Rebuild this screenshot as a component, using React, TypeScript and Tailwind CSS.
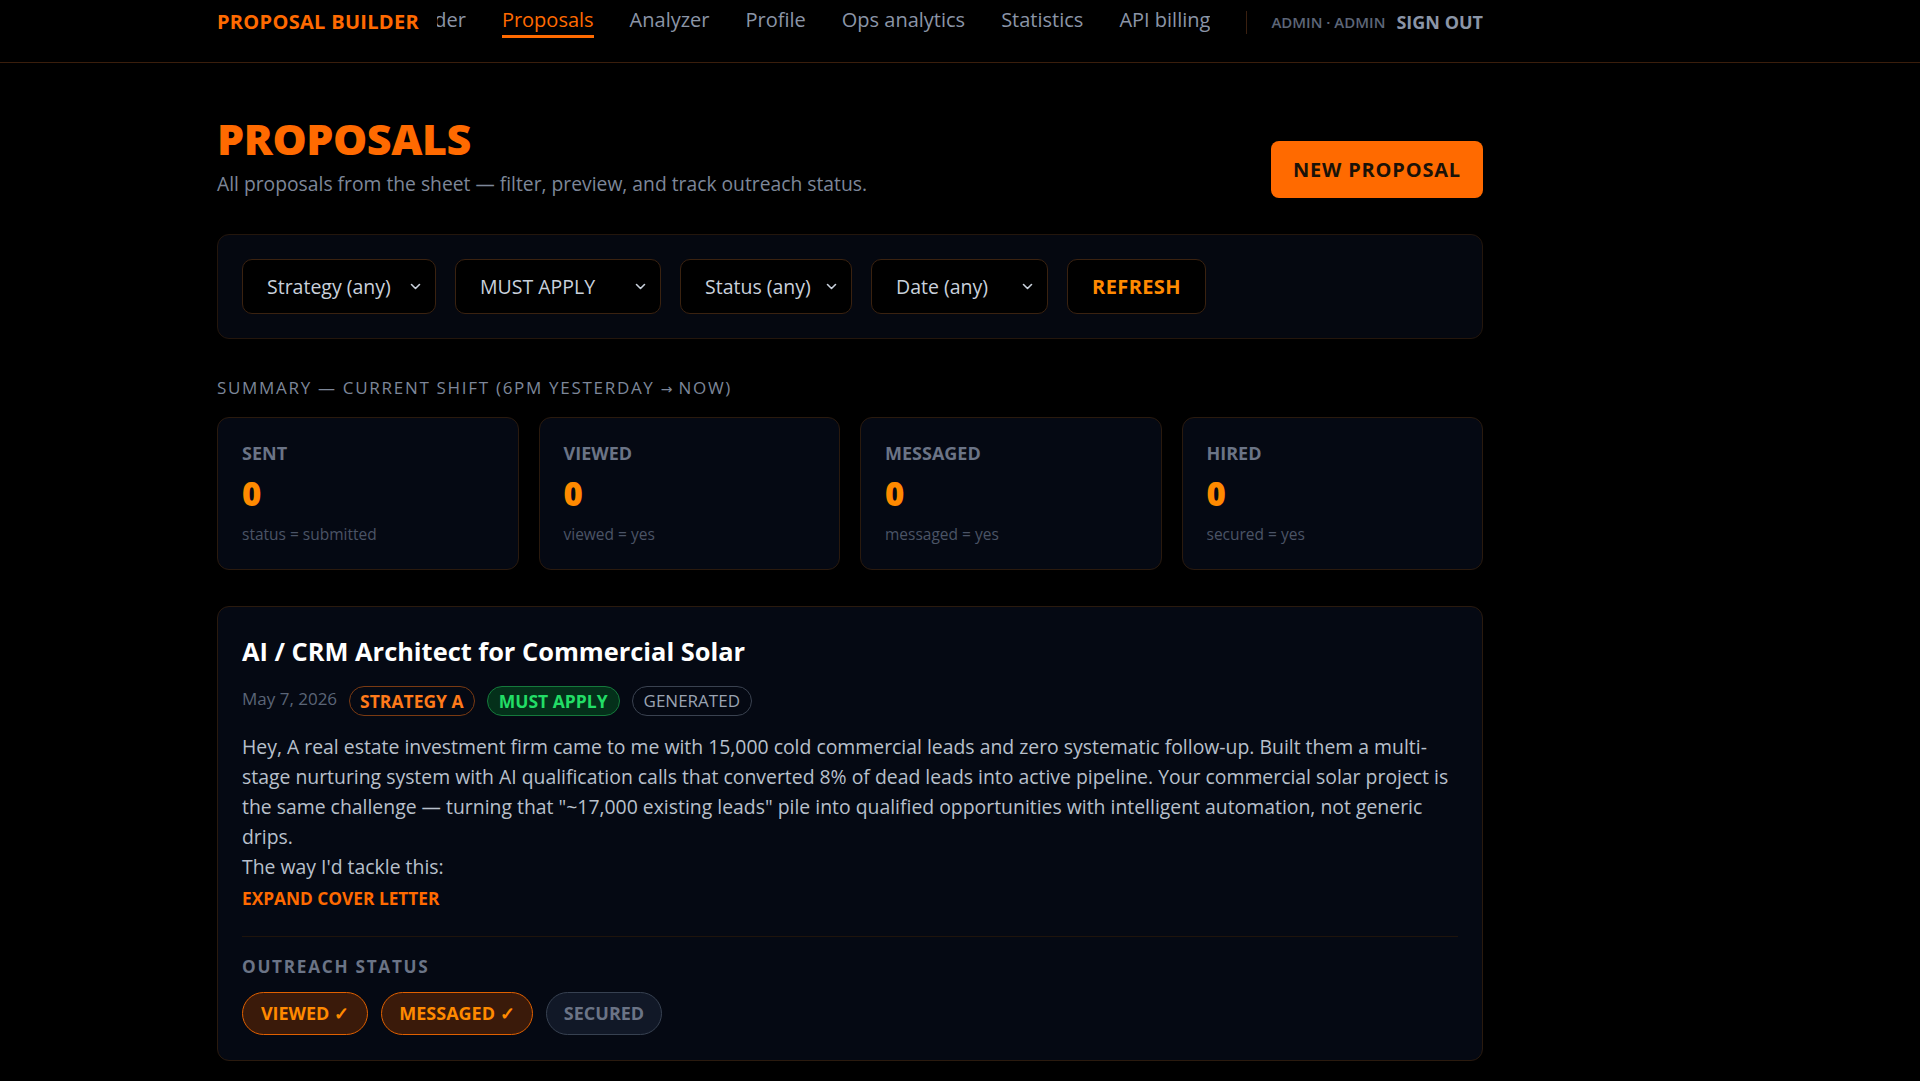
import React from "react";

const Chevron = () => (
  <svg width="11" height="7" viewBox="0 0 11 7" fill="none" className="shrink-0">
    <path d="M1.5 1.5 L5.5 5.5 L9.5 1.5" stroke="#c9d1dc" strokeWidth="1.6" strokeLinecap="round" strokeLinejoin="round" />
  </svg>
);

function Select({ label, w }: { label: string; w: string }) {
  return (
    <div className={`${w} h-[55px] flex items-center justify-between pl-[24px] pr-[14px] rounded-[10px] border border-[#3a2210] bg-black text-[19.5px] text-[#c9d1dc]`}>
      <span>{label}</span>
      <Chevron />
    </div>
  );
}

function Stat({ label, sub }: { label: string; sub: string }) {
  return (
    <div className="rounded-[12px] border border-[#2a1a0e] bg-[#050913] px-6 pt-[23px] pb-6">
      <div className="text-[18px] leading-[24px] font-bold text-[#6b7486]">{label}</div>
      <div className="mt-[9px] text-[33px] leading-[40px] font-extrabold text-[#ff8a00]">0</div>
      <div className="mt-[9px] text-[15.5px] leading-[22px] text-[#4b5466]">{sub}</div>
    </div>
  );
}

export default function App() {
  const nav = ["Proposal Builder", "Proposals", "Analyzer", "Profile", "Ops analytics", "Statistics", "API billing"];
  return (
    <div className="min-h-screen bg-black font-['Open_Sans',sans-serif] text-[#c9d1dc]">
      <header className="h-[63px] border-b border-[#3a1e0c] pl-[217px]">
        <div className="w-[1266px] flex items-start pt-[6px]">
          <div className="shrink-0 text-[20px] leading-[28px] font-bold text-[#ff6a00] tracking-[0.015em] mt-[2px]">
            PROPOSAL BUILDER
          </div>
          <nav className="flex-1 min-w-0 ml-[18px] overflow-hidden flex justify-end gap-9">
            {nav.map((n) => (
              <div
                key={n}
                className={
                  n === "Proposals"
                    ? "shrink-0 whitespace-nowrap text-[20px] leading-[28px] text-[#ff6a00] border-b-[3px] border-[#ff6a00] pb-[1px]"
                    : "shrink-0 whitespace-nowrap text-[20px] leading-[28px] text-[#8b95a7] pb-[4px]"
                }
              >
                {n}
              </div>
            ))}
          </nav>
          <div className="shrink-0 flex items-center ml-9 mt-[3px]">
            <div className="h-[23px] border-l border-[#3a2010]" />
            <div className="ml-6 text-[15px] font-semibold text-[#5d6678]">ADMIN · ADMIN</div>
            <div className="ml-[11px] text-[18px] font-bold text-[#8b95a7]">SIGN OUT</div>
          </div>
        </div>
      </header>

      <main className="pl-[217px] pt-[51px] pb-10">
        <div className="w-[1266px]">
          <div className="flex items-end justify-between">
            <div>
              <h1 className="text-[43px] leading-[50px] font-extrabold text-[#ff6a00] tracking-[-0.01em]">PROPOSALS</h1>
              <p className="mt-[6px] text-[19.3px] leading-[28px] text-[#7d8799]">
                All proposals from the sheet — filter, preview, and track outreach status.
              </p>
            </div>
            <button className="h-[57px] w-[212px] rounded-[8px] bg-[#ff6a00] text-[20px] font-bold tracking-[0.04em] text-[#1a1208]">
              NEW PROPOSAL
            </button>
          </div>

          <div className="mt-9 rounded-[12px] border border-[#24160c] bg-[#050810] p-6 flex gap-[19px]">
            <Select label="Strategy (any)" w="w-[194px]" />
            <Select label="MUST APPLY" w="w-[206px]" />
            <Select label="Status (any)" w="w-[172px]" />
            <Select label="Date (any)" w="w-[177px]" />
            <button className="w-[139px] h-[55px] rounded-[10px] border border-[#3a2210] bg-black text-[20px] font-bold text-[#ff8a00] tracking-[0.02em]">
              REFRESH
            </button>
          </div>

          <div className="mt-[37px] text-[17px] leading-[24px] tracking-[0.1em] text-[#7d8799]">
            SUMMARY — CURRENT SHIFT (6PM YESTERDAY <span className="font-['DejaVu_Sans',sans-serif] text-[14px] tracking-normal">→</span> NOW)
          </div>

          <div className="mt-4 grid grid-cols-4 gap-5">
            <Stat label="SENT" sub="status = submitted" />
            <Stat label="VIEWED" sub="viewed = yes" />
            <Stat label="MESSAGED" sub="messaged = yes" />
            <Stat label="HIRED" sub="secured = yes" />
          </div>

          <div className="mt-9 rounded-[12px] border border-[#2a1a0e] bg-[#050913] px-6 pt-[28px] pb-[25px]">
            <h2 className="text-[25.4px] leading-[32px] font-bold text-white">AI / CRM Architect for Commercial Solar</h2>
            <div className="mt-[19px] flex items-center gap-[12px]">
              <span className="text-[17px] text-[#5b6577] -mt-[4px]">May 7, 2026</span>
              <span className="h-[30px] px-[10px] flex items-center rounded-full border border-[#7a3a12] text-[17.5px] font-bold text-[#ff7a1a]">
                STRATEGY A
              </span>
              <span className="h-[30px] px-[11px] flex items-center rounded-full border border-[#157a3c] bg-[#04301a] text-[17.5px] font-bold text-[#22dd66]">
                MUST APPLY
              </span>
              <span className="h-[30px] px-[11px] flex items-center rounded-full border border-[#3a4250] text-[17px] text-[#9aa3b2]">
                GENERATED
              </span>
            </div>
            <div className="mt-4 text-[19.4px] leading-[30px] text-[#b8c0cc]">
              <p>
                Hey, A real estate investment firm came to me with 15,000 cold commercial leads and zero systematic follow-up. Built them a multi-stage nurturing system with AI qualification calls that converted 8% of dead leads into active pipeline. Your commercial solar project is the same challenge — turning that "~17,000 existing leads" pile into qualified opportunities with intelligent automation, not generic drips.
              </p>
              <p>The way I'd tackle this:</p>
            </div>
            <div className="mt-[5px] text-[17.3px] leading-[24px] font-bold text-[#ff6a00]">EXPAND COVER LETTER</div>
            <div className="mt-[25px] border-t border-[#1f140c] pt-[18px]">
              <div className="text-[17.2px] leading-[24px] font-bold tracking-[0.1em] text-[#6b7486]">OUTREACH STATUS</div>
              <div className="mt-[13px] flex gap-[13px]">
                <span className="h-[43px] w-[126px] flex items-center justify-center rounded-full border border-[#e06000] bg-[#3a1a0a] text-[18px] font-bold text-[#ff8a00]">
                  VIEWED ✓
                </span>
                <span className="h-[43px] w-[152px] flex items-center justify-center rounded-full border border-[#e06000] bg-[#3a1a0a] text-[18px] font-bold text-[#ff8a00]">
                  MESSAGED ✓
                </span>
                <span className="h-[43px] w-[116px] flex items-center justify-center rounded-full border border-[#374151] bg-[#111827] text-[18px] font-bold text-[#6b7486]">
                  SECURED
                </span>
              </div>
            </div>
          </div>
        </div>
      </main>
    </div>
  );
}
